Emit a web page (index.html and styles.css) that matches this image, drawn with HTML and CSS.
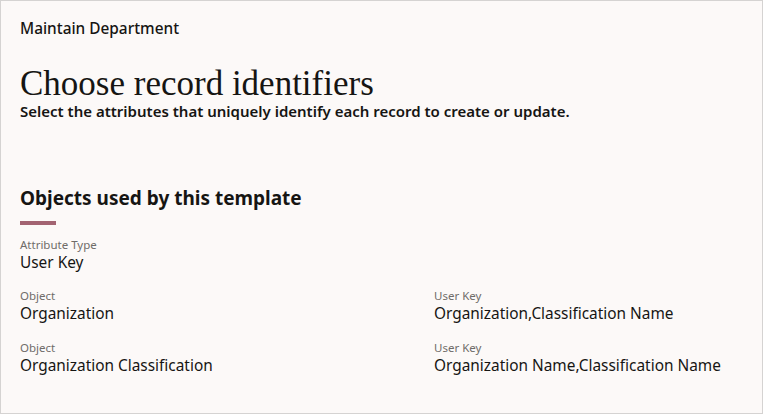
FILE: index.html
```html
<!DOCTYPE html>
<html>
<head>
<meta charset="utf-8">
<link rel="stylesheet" href="styles.css">
</head>
<body>
<div class="page">
  <div class="crumb">Maintain Department</div>
  <h1 class="title">Choose record identifiers</h1>
  <p class="subtitle">Select the attributes that uniquely identify each record to create or update.</p>
  <h2 class="section">Objects used by this template</h2>
  <div class="accent"></div>
  <div class="field">
    <div class="label">Attribute Type</div>
    <div class="value">User Key</div>
  </div>
  <div class="grid">
    <div class="field">
      <div class="label">Object</div>
      <div class="value">Organization</div>
    </div>
    <div class="field">
      <div class="label">User Key</div>
      <div class="value">Organization,Classification Name</div>
    </div>
    <div class="field">
      <div class="label">Object</div>
      <div class="value">Organization Classification</div>
    </div>
    <div class="field">
      <div class="label">User Key</div>
      <div class="value">Organization Name,Classification Name</div>
    </div>
  </div>
</div>
</body>
</html>
```
FILE: styles.css
```css
html, body {
  margin: 0;
  padding: 0;
  height: 100%;
}
body {
  font-family: "Noto Sans", sans-serif;
  color: #161513;
  background: #fcf9f8;
}
.page {
  box-sizing: border-box;
  height: 414px;
  border: 1px solid #d5d3d2;
  padding: 19px 19px 0 19px;
}
.crumb {
  font-size: 15.4px;
  font-weight: 500;
  line-height: 18px;
}
.title {
  margin: 28px 0 0 0;
  font-family: "Liberation Serif", serif;
  font-weight: 400;
  font-size: 35px;
  line-height: 36px;
}
.subtitle {
  margin: 0;
  font-size: 15px;
  font-weight: 600;
  line-height: 18px;
}
.section {
  margin: 66px 0 0 0;
  font-size: 19px;
  font-weight: 700;
  line-height: 24px;
}
.accent {
  width: 36px;
  height: 4px;
  background: #a36472;
  margin-top: 11px;
}
.field {
  display: flex;
  flex-direction: column;
}
.accent + .field {
  margin-top: 12px;
}
.label {
  font-size: 11.5px;
  line-height: 16px;
  color: #6f6c69;
}
.value {
  font-size: 15.4px;
  line-height: 19px;
}
.grid {
  margin-top: 16px;
  display: grid;
  grid-template-columns: 414px 1fr;
  row-gap: 17px;
}
```
